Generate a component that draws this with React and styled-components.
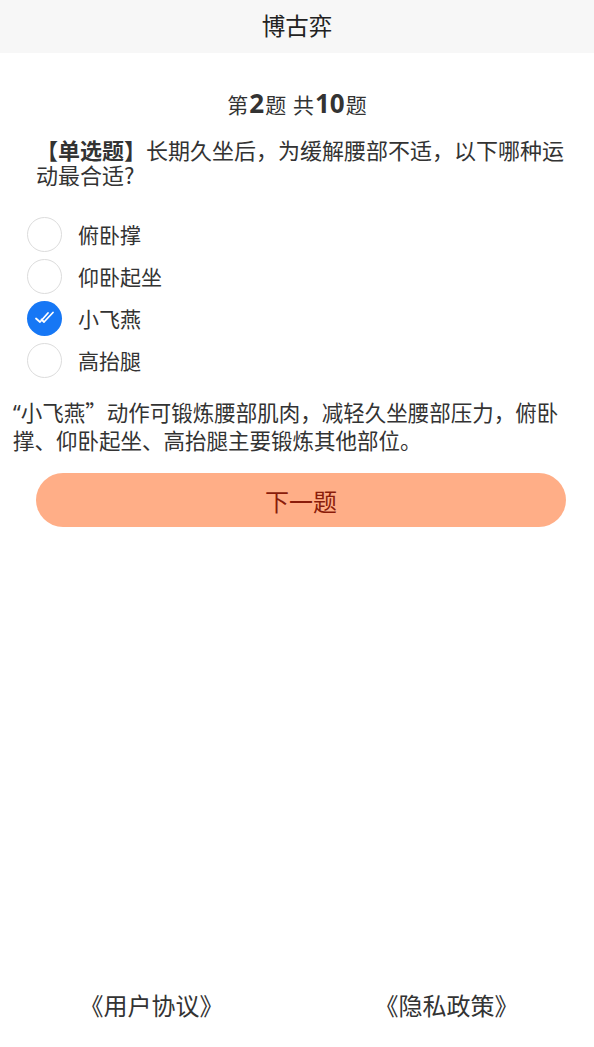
import styled, { createGlobalStyle } from "styled-components";

const GlobalStyle = createGlobalStyle`
    html, body{
        margin: 0;
        padding: 0;
        background: #fff;
        font-family: "Noto Sans CJK SC", "Noto Sans", sans-serif;
        color: #333;
    }
`
const Page = styled.div`
    width: 594px;
    height: 1047px;
    display: flex;
    flex-direction: column;
    overflow: hidden;
`
const Header = styled.div`
    height: 53px;
    box-sizing: border-box;
    padding-bottom: 3px;
    background: #f7f7f7;
    display: flex;
    justify-content: center;
    align-items: center;
    font-size: 23.5px;
    color: #222;
`
const Main = styled.div`
    flex: 1;
    display: flex;
    flex-direction: column;
`
const Progress = styled.div`
    margin-top: 35px;
    text-align: center;
    font-size: 21px;
    line-height: 30px;
    color: #333;
    word-spacing: 2px;
    b{
        font-family: "Noto Sans", sans-serif;
        font-size: 26px;
        font-weight: 700;
        margin: 0 1px;
    }
`
const Question = styled.div`
    margin: 18px 22px 0 36px;
    font-size: 22px;
    line-height: 25px;
    color: #333;
    b{
        font-weight: 700;
    }
`
const Options = styled.div`
    margin-top: 30px;
    padding-left: 27px;
    display: flex;
    flex-direction: column;
    gap: 8px;
`
const Option = styled.div`
    height: 34px;
    display: flex;
    align-items: center;
    gap: 16px;
    font-size: 21px;
    color: #333;
`
const Radio = styled.div`
    width: 35px;
    height: 35px;
    box-sizing: border-box;
    border-radius: 50%;
    border: ${(props) => (props.$checked ? "none" : "1.5px solid #dcdcdc")};
    background: ${(props) => (props.$checked ? "#1677f5" : "#fff")};
    display: flex;
    justify-content: center;
    align-items: center;
`
const Explain = styled.div`
    margin: 21px 20px 0 13px;
    font-size: 21.5px;
    line-height: 27px;
    color: #333;
`
const Quote = styled.span`
    font-family: "Noto Sans", sans-serif;
`
const NextButton = styled.button`
    margin: 20px 28px 0 36px;
    height: 54px;
    border: none;
    border-radius: 27px;
    background: #ffae87;
    color: #8a1c0a;
    font-family: inherit;
    font-size: 24px;
    cursor: pointer;
`
const Footer = styled.div`
    height: 80px;
    margin-bottom: 3px;
    padding-left: 4px;
    display: grid;
    grid-template-columns: 1fr 1fr;
    align-items: center;
`
const Link = styled.div`
    text-align: center;
    font-size: 24px;
    color: #333;
`

function Check(){
    return (
        <svg width="22" height="14" viewBox="0 0 22 14" fill="none" stroke="#fff" strokeWidth="1.8" strokeLinecap="round" strokeLinejoin="round">
            <path d="M2 7.5l4 3.5 8-9" />
            <path d="M7.5 8.5l2.5 2.5 9-9.5" />
        </svg>
    );
}

const options = ["俯卧撑", "仰卧起坐", "小飞燕", "高抬腿"];

export default function App(){
    const selected = 2;
    return <>
        <GlobalStyle />
        <Page>
            <Header>博古弈</Header>
            <Main>
                <Progress>第<b>2</b>题 共<b>10</b>题</Progress>
                <Question>
                    <b>【单选题】</b>长期久坐后，为缓解腰部不适，以下哪种运动最合适?
                </Question>
                <Options>
                    {options.map((o, i) => (
                        <Option key={o}>
                            <Radio $checked={i === selected}>
                                {i === selected && <Check />}
                            </Radio>
                            {o}
                        </Option>
                    ))}
                </Options>
                <Explain>
                    <Quote>“</Quote>小飞燕”动作可锻炼腰部肌肉，减轻久坐腰部压力，俯卧撑、仰卧起坐、高抬腿主要锻炼其他部位。
                </Explain>
                <NextButton>下一题</NextButton>
            </Main>
            <Footer>
                <Link>《用户协议》</Link>
                <Link>《隐私政策》</Link>
            </Footer>
        </Page>
    </>;
}
